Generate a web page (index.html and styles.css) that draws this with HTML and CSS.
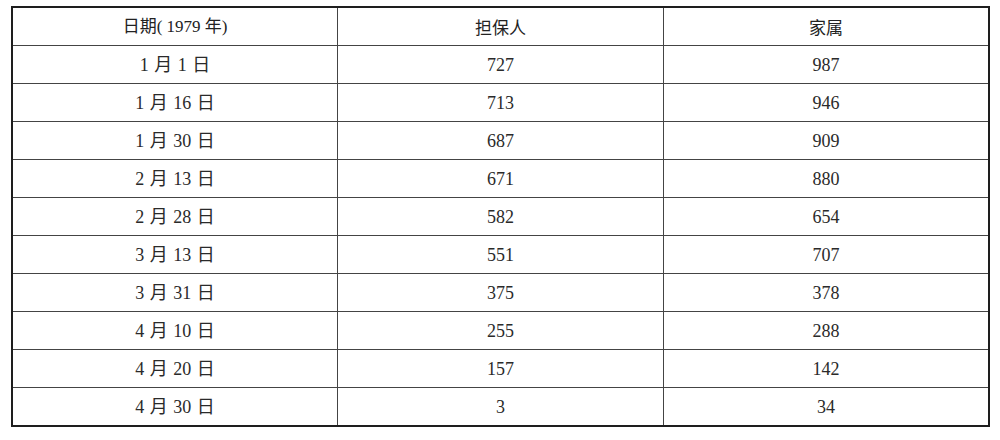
FILE: index.html
```html
<!DOCTYPE html>
<html lang="zh">
<head>
<meta charset="utf-8">
<link rel="stylesheet" href="styles.css">
</head>
<body>
<table class="data">
  <colgroup><col class="c"><col class="c"><col class="c"></colgroup>
  <thead>
    <tr><th>日期( 1979 年)</th><th>担保人</th><th>家属</th></tr>
  </thead>
  <tbody>
    <tr><td>1 月 1 日</td><td>727</td><td>987</td></tr>
    <tr><td>1 月 16 日</td><td>713</td><td>946</td></tr>
    <tr><td>1 月 30 日</td><td>687</td><td>909</td></tr>
    <tr><td>2 月 13 日</td><td>671</td><td>880</td></tr>
    <tr><td>2 月 28 日</td><td>582</td><td>654</td></tr>
    <tr><td>3 月 13 日</td><td>551</td><td>707</td></tr>
    <tr><td>3 月 31 日</td><td>375</td><td>378</td></tr>
    <tr><td>4 月 10 日</td><td>255</td><td>288</td></tr>
    <tr><td>4 月 20 日</td><td>157</td><td>142</td></tr>
    <tr><td>4 月 30 日</td><td>3</td><td>34</td></tr>
  </tbody>
</table>
</body>
</html>
```

FILE: styles.css
```css
html, body {
  margin: 0;
  padding: 0;
  background: #fff;
}
body {
  padding: 6px 0 0 11px;
}
.data {
  width: 979px;
  border-collapse: collapse;
  table-layout: fixed;
  border: 2px solid #1e1e1e;
  font-family: "Liberation Serif", "Noto Sans CJK SC", serif;
  font-size: 18px;
  color: #2a2a2a;
}
.data .c {
  width: 33.333%;
}
.data th,
.data td {
  height: 37px;
  padding: 0;
  border: 1px solid #444;
  text-align: center;
  vertical-align: middle;
  font-weight: normal;
  line-height: 1;
}
.data td {
  word-spacing: 1px;
}
.data th {
  font-family: "Noto Sans CJK SC", sans-serif;
  font-size: 17px;
  color: #222;
}
.data th:first-child {
  font-family: "Liberation Serif", "Noto Sans CJK SC", serif;
}
```
